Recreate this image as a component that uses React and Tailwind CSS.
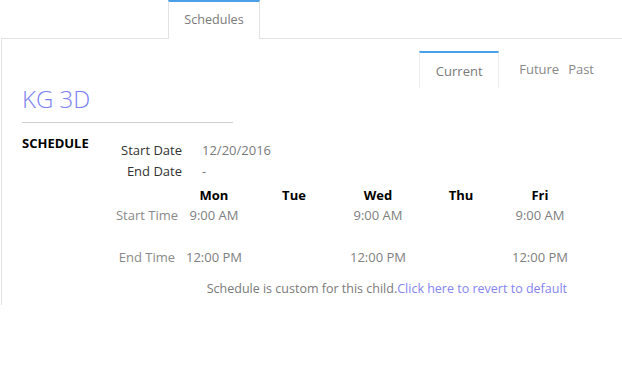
import React from 'react';

const days = ['Mon', 'Tue', 'Wed', 'Thu', 'Fri'];
const colWidths = ['w-[64px]', 'w-[96px]', 'w-[72px]', 'w-[94px]', 'w-[64px]'];

const startTimes = ['9:00 AM', '', '9:00 AM', '', '9:00 AM'];
const endTimes = ['12:00 PM', '', '12:00 PM', '', '12:00 PM'];

const TimeRow = ({ label, values }) => (
  <div className="flex h-[21px] items-center leading-[21px]">
    <div className="w-[70px] text-center text-[#8a8a8a]">{label}</div>
    {values.map((v, i) => (
      <div key={i} className={`${colWidths[i]} text-center text-[#808080]`}>
        {v}
      </div>
    ))}
  </div>
);

const App = () => {
  return (
    <div
      className="w-[622px] h-[370px] bg-white text-[13px]"
      style={{ fontFamily: '"Open Sans", "Liberation Sans", sans-serif' }}
    >
      {/* top tabs */}
      <div className="flex pl-[168px] h-[38px]">
        <div className="w-[92px] h-[39px] border-t-2 border-x border-t-[#4a9fe8] border-x-[#e3e3e3] bg-white flex items-center justify-center text-[12.6px] text-[#7a7a7a] relative z-10">
          Schedules
        </div>
      </div>

      {/* panel */}
      <div className="ml-px h-[267px] border-t border-l border-[#e3e3e3]">
        {/* period tabs */}
        <div className="flex justify-end items-start pt-[12px] pr-[28px] h-[49px]">
          <div className="w-[80px] h-[37px] border-t-2 border-x border-t-[#4a9fe8] border-x-[#ececec] flex items-center justify-center pt-[2px] text-[#7a7a7a]">
            Current
          </div>
          <div className="ml-[20px] h-[37px] flex items-center gap-[9px] pt-[1px] text-[#888]">
            <span>Future</span>
            <span>Past</span>
          </div>
        </div>

        <div className="pl-[20px]">
          <div className="w-[211px] border-b border-[#cfcfcf] pb-[12px]">
            <h1 className="text-[24px] leading-[22px] font-light text-[#7b7ff0]">KG 3D</h1>
          </div>

          <div className="flex mt-[12px]">
            <div className="w-[90px] text-[13px] leading-[16px] font-bold text-black">SCHEDULE</div>
            <div className="pt-[5px]">
              {/* dates */}
              <div className="-ml-[1px] grid grid-cols-[71px_auto] gap-x-[20px] leading-[21px]">
                <div className="text-right text-[#333]">Start Date</div>
                <div className="text-[#7a7a7a]">12/20/2016</div>
                <div className="text-right text-[#333]">End Date</div>
                <div className="text-[#7a7a7a]">-</div>
              </div>

              {/* weekly schedule */}
              <div className="mt-[3px]">
                <div className="flex h-[20px] items-center leading-[20px]">
                  <div className="w-[70px]" />
                  {days.map((d, i) => (
                    <div key={d} className={`${colWidths[i]} text-center font-bold text-black`}>
                      {d}
                    </div>
                  ))}
                </div>
                <TimeRow label="Start Time" values={startTimes} />
                <div className="h-[21px]" />
                <TimeRow label="End Time" values={endTimes} />
              </div>
            </div>
          </div>

          <div className="mt-[10px] pr-[55px] text-right text-[12.5px] leading-[21px] text-[#7a7a7a]">
            Schedule is custom for this child.
            <a href="#" className="text-[#8585f0]">Click here to revert to default</a>
          </div>
        </div>
      </div>
    </div>
  );
};

export default App;
